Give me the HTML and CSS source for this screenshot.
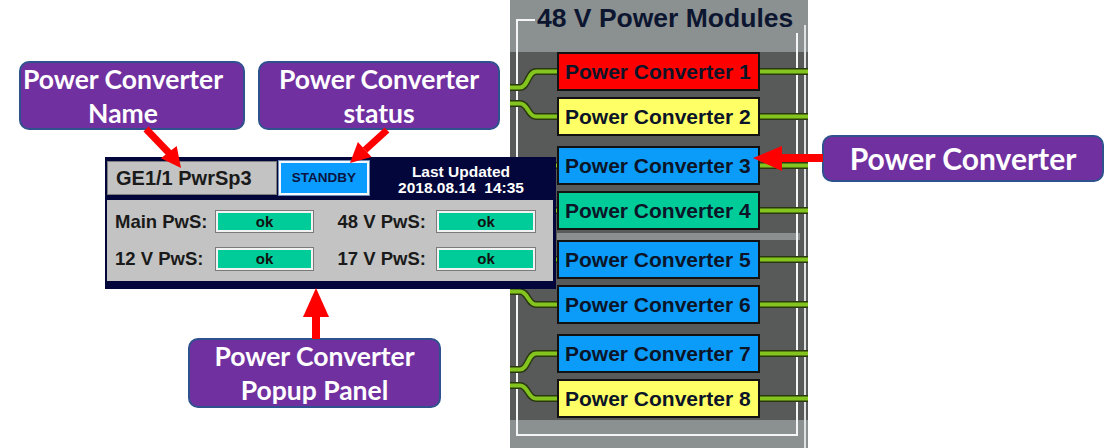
FILE: index.html
```html
<!DOCTYPE html>
<html>
<head>
<meta charset="utf-8">
<link rel="stylesheet" href="styles.css">
</head>
<body>
<div class="canvas">

  <div class="rack">
    <svg class="rack-lines" width="298" height="448" viewBox="0 0 298 448">
      <rect x="47" y="233" width="243" height="7" fill="#8b8f8f"/>
      <path d="M25,20 H7 V435 H287 V33" fill="none" stroke="#f4f6f6" stroke-width="2"/>
      <path d="M295,25 V448" fill="none" stroke="#dfe3e3" stroke-width="2"/>
      <g fill="none" stroke="#2a3810" stroke-width="7" stroke-linejoin="round">
        <path d="M250,71.5 H298 M250,116.5 H298 M250,165.5 H298 M250,210.5 H298 M250,259.5 H298 M250,304.5 H298 M250,353.5 H298 M250,398.5 H298"/>
        <path d="M47,71.5 H26 C18,71.5 18,87.5 10,87.5 H0 M47,116.5 H26 C18,116.5 18,103.5 10,103.5 H0"/>
        <path d="M47,165.5 H26 C18,165.5 18,181.5 10,181.5 H0 M47,210.5 H26 C18,210.5 18,197.5 10,197.5 H0"/>
        <path d="M47,259.5 H26 C18,259.5 18,275.5 10,275.5 H0 M47,304.5 H26 C18,304.5 18,291.5 10,291.5 H0"/>
        <path d="M47,353.5 H26 C18,353.5 18,369.5 10,369.5 H0 M47,398.5 H26 C18,398.5 18,385.5 10,385.5 H0"/>
      </g>
      <g fill="none" stroke="#84c41e" stroke-width="4" stroke-linejoin="round">
        <path d="M250,71.5 H298 M250,116.5 H298 M250,165.5 H298 M250,210.5 H298 M250,259.5 H298 M250,304.5 H298 M250,353.5 H298 M250,398.5 H298"/>
        <path d="M47,71.5 H26 C18,71.5 18,87.5 10,87.5 H0 M47,116.5 H26 C18,116.5 18,103.5 10,103.5 H0"/>
        <path d="M47,165.5 H26 C18,165.5 18,181.5 10,181.5 H0 M47,210.5 H26 C18,210.5 18,197.5 10,197.5 H0"/>
        <path d="M47,259.5 H26 C18,259.5 18,275.5 10,275.5 H0 M47,304.5 H26 C18,304.5 18,291.5 10,291.5 H0"/>
        <path d="M47,353.5 H26 C18,353.5 18,369.5 10,369.5 H0 M47,398.5 H26 C18,398.5 18,385.5 10,385.5 H0"/>
      </g>
    </svg>
    <div class="rack-title">48 V Power Modules</div>
    <div class="rack-list">
      <div class="pair">
        <div class="pc red">Power Converter 1</div>
        <div class="pc yellow">Power Converter 2</div>
      </div>
      <div class="pair">
        <div class="pc blue">Power Converter 3</div>
        <div class="pc green">Power Converter 4</div>
      </div>
      <div class="pair">
        <div class="pc blue">Power Converter 5</div>
        <div class="pc blue">Power Converter 6</div>
      </div>
      <div class="pair">
        <div class="pc blue">Power Converter 7</div>
        <div class="pc yellow">Power Converter 8</div>
      </div>
    </div>
  </div>

  <div class="popup">
    <div class="pop-head">
      <div class="pop-name">GE1/1 PwrSp3</div>
      <div class="pop-state">STANDBY</div>
      <div class="pop-time">
        <div>Last Updated</div>
        <div>2018.08.14&nbsp;&nbsp;14:35</div>
      </div>
    </div>
    <div class="pop-body">
      <span class="pws-label">Main PwS:</span><span class="pws-box">ok</span>
      <span class="pws-label right">48 V PwS:</span><span class="pws-box">ok</span>
      <span class="pws-label">12 V PwS:</span><span class="pws-box">ok</span>
      <span class="pws-label right">17 V PwS:</span><span class="pws-box">ok</span>
    </div>
  </div>

  <div class="callout c-name"><div>Power Converter<br>Name</div></div>
  <div class="callout c-status"><div>Power Converter<br>status</div></div>
  <div class="callout c-popup"><div>Power Converter<br>Popup Panel</div></div>
  <div class="callout c-conv"><div>Power Converter</div></div>

  <svg class="arrows" width="1106" height="448" viewBox="0 0 1106 448">
    <g fill="#ff0000" stroke="none">
      <line x1="146" y1="129" x2="170" y2="154" stroke="#ff0000" stroke-width="7"/>
      <polygon points="181,168 160.9,158.2 176.7,146.0"/>
      <line x1="387" y1="130" x2="365" y2="150" stroke="#ff0000" stroke-width="7"/>
      <polygon points="350,163 357.9,142.1 371.5,156.9"/>
      <rect x="312" y="316" width="8" height="23"/>
      <polygon points="316,288 303,317 329,317"/>
      <rect x="781" y="154" width="42" height="8"/>
      <polygon points="753,158 782,146 782,171"/>
    </g>
  </svg>
</div>
</body>
</html>
```

FILE: styles.css
```css
html, body {
  margin: 0;
  padding: 0;
  background: #ffffff;
}

.canvas {
  position: relative;
  width: 1106px;
  height: 448px;
  overflow: hidden;
  background: #ffffff;
  font-family: "Liberation Sans", Arial, sans-serif;
}

/* ---------- rack of modules ---------- */
.rack {
  position: absolute;
  left: 510px;
  top: 0;
  width: 298px;
  height: 448px;
  background: linear-gradient(to bottom,
    #8b9090 0, #8b9090 52px,
    #585a5a 52px, #585a5a 420px,
    #8b9090 420px, #8b9090 100%);
}

.rack-lines {
  position: absolute;
  left: 0;
  top: 0;
}

.rack-title {
  position: relative;
  box-sizing: border-box;
  height: 52px;
  padding: 5px 0 0 27px;
  font-size: 26.5px;
  line-height: 26px;
  font-weight: bold;
  color: #0c1630;
  white-space: nowrap;
}

.rack-list {
  position: relative;
  display: flex;
  flex-direction: column;
  gap: 10px;
  padding-left: 47px;
}

.pair {
  display: flex;
  flex-direction: column;
  gap: 6px;
}

.pc {
  box-sizing: border-box;
  width: 203px;
  height: 39px;
  border: 2px solid #121212;
  padding-left: 6px;
  font-size: 21px;
  line-height: 35px;
  font-weight: bold;
  color: #0c1428;
  white-space: nowrap;
}

.red { background: #ff0000; }
.yellow { background: #ffff66; }
.blue { background: #0a9cf8; }
.green { background: #00cc99; }

/* ---------- popup panel ---------- */
.popup {
  position: absolute;
  left: 105px;
  top: 157px;
  width: 451px;
  height: 132px;
  box-sizing: border-box;
  background: #03063a;
  padding: 4px 3px 8px 2px;
  display: flex;
  flex-direction: column;
  gap: 5px;
}

.pop-head {
  display: flex;
  height: 34px;
}

.pop-name {
  box-sizing: border-box;
  width: 170px;
  background: #c3c3c3;
  border: 1px solid #7d7d7d;
  padding-left: 8px;
  font-size: 20px;
  line-height: 32px;
  font-weight: bold;
  color: #1a1a1a;
  white-space: nowrap;
}

.pop-state {
  box-sizing: border-box;
  width: 90px;
  margin-left: 2px;
  background: #0a9cff;
  border: 2px solid #f4f8ff;
  box-shadow: 0 0 0 1px #6f8fb8;
  font-size: 13.5px;
  line-height: 30px;
  font-weight: bold;
  color: #0a1440;
  text-align: center;
}

.pop-time {
  flex: 1;
  padding-top: 3px;
  color: #ffffff;
  font-size: 15.5px;
  line-height: 16px;
  font-weight: bold;
  text-align: center;
  white-space: nowrap;
}

.pop-body {
  box-sizing: border-box;
  height: 81px;
  background: #c3c3c3;
  display: grid;
  grid-template-columns: 100px 99px 122px 100px;
  grid-template-rows: 23px 24px;
  row-gap: 14px;
  padding: 10px 16px 0 8px;
  align-items: center;
}

.pws-label {
  font-size: 18.5px;
  font-weight: bold;
  color: #1a1a1a;
  white-space: nowrap;
}

.pws-label.right {
  text-align: right;
  padding-right: 10px;
}

.pws-box {
  box-sizing: border-box;
  height: 100%;
  border: 1px solid #7a7a7a;
  box-shadow: inset 0 0 0 2px #f2f2f2;
  background: #00cc99;
  font-size: 15px;
  line-height: 21px;
  font-weight: bold;
  color: #111111;
  text-align: center;
}

/* ---------- callouts ---------- */
.callout {
  position: absolute;
  box-sizing: border-box;
  display: flex;
  flex-direction: column;
  justify-content: center;
  background: #7030a0;
  border: 2px solid #2f528f;
  border-radius: 10px;
  color: #ffffff;
  font-family: Lato, "Open Sans", sans-serif;
  font-weight: bold;
  font-size: 26.5px;
  line-height: 34px;
  text-align: center;
  white-space: nowrap;
}

.c-name {
  left: 19px;
  top: 61px;
  width: 226px;
  height: 69px;
  padding-right: 18px;
}

.c-status {
  left: 258px;
  top: 61px;
  width: 242px;
  height: 69px;
}

.c-popup {
  left: 188px;
  top: 338px;
  width: 253px;
  height: 70px;
}

.c-conv {
  left: 822px;
  top: 135px;
  width: 282px;
  height: 47px;
  font-size: 30px;
  line-height: 43px;
}

/* ---------- arrows ---------- */
.arrows {
  position: absolute;
  left: 0;
  top: 0;
  pointer-events: none;
}
```
